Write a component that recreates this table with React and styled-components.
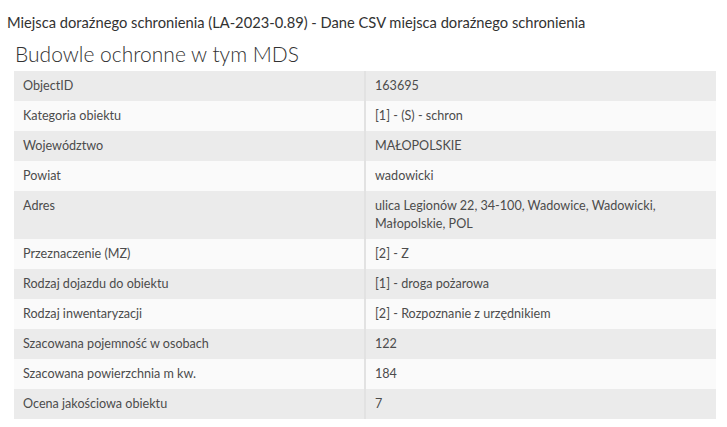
import React from 'react';
import styled, { createGlobalStyle } from 'styled-components';

const GlobalStyle = createGlobalStyle`
  body {
    margin: 0;
    background: #ffffff;
    font-family: Lato, "Open Sans", sans-serif;
    color: #323232;
  }
`;

const rows = [
  ['ObjectID', '163695'],
  ['Kategoria obiektu', '[1] - (S) - schron'],
  ['Województwo', 'MAŁOPOLSKIE'],
  ['Powiat', 'wadowicki'],
  ['Adres', 'ulica Legionów 22, 34-100, Wadowice, Wadowicki, Małopolskie, POL'],
  ['Przeznaczenie (MZ)', '[2] - Z'],
  ['Rodzaj dojazdu do obiektu', '[1] - droga pożarowa'],
  ['Rodzaj inwentaryzacji', '[2] - Rozpoznanie z urzędnikiem'],
  ['Szacowana pojemność w osobach', '122'],
  ['Szacowana powierzchnia m kw.', '184'],
  ['Ocena jakościowa obiektu', '7'],
];

const App = () => (
  <>
    <GlobalStyle />
    <Popup>
      <Title>Miejsca doraźnego schronienia (LA-2023-0.89) - Dane CSV miejsca doraźnego schronienia</Title>
      <Heading>Budowle ochronne w tym MDS</Heading>
      <Table>
        <colgroup>
          <col style={ { width: '50%' } } />
          <col style={ { width: '50%' } } />
        </colgroup>
        <tbody>
          { rows.map(([label, value], i) => (
            <Row key={ label } $odd={ i % 2 === 0 }>
              <Label>{ label }</Label>
              <Value>{ value }</Value>
            </Row>
          )) }
        </tbody>
      </Table>
    </Popup>
  </>
);

export default App;

const Popup = styled.div`
  padding: 12px 11px 0 7px;
`;

const Title = styled.div`
  font-size: 14.7px;
  line-height: 20px;
  color: #323232;
`;

const Heading = styled.h2`
  font-size: 21px;
  font-weight: 300;
  line-height: 26px;
  margin: 9px 0 4px 8px;
  color: #323232;
`;

const Table = styled.table`
  width: calc(100% - 7px);
  margin-left: 7px;
  border-collapse: collapse;
  table-layout: fixed;
  font-size: 12.6px;
  line-height: 18px;
`;

const Row = styled.tr`
  background: ${ ({ $odd }) => ($odd ? '#ebebeb' : '#fafafa') };
`;

const Label = styled.td`
  padding: 6px 9px;
  vertical-align: top;
  color: #4c4c4c;
  border-right: 2px solid #e2e2e2;
`;

const Value = styled.td`
  padding: 6px 9px;
  vertical-align: top;
  color: #4c4c4c;
`;
